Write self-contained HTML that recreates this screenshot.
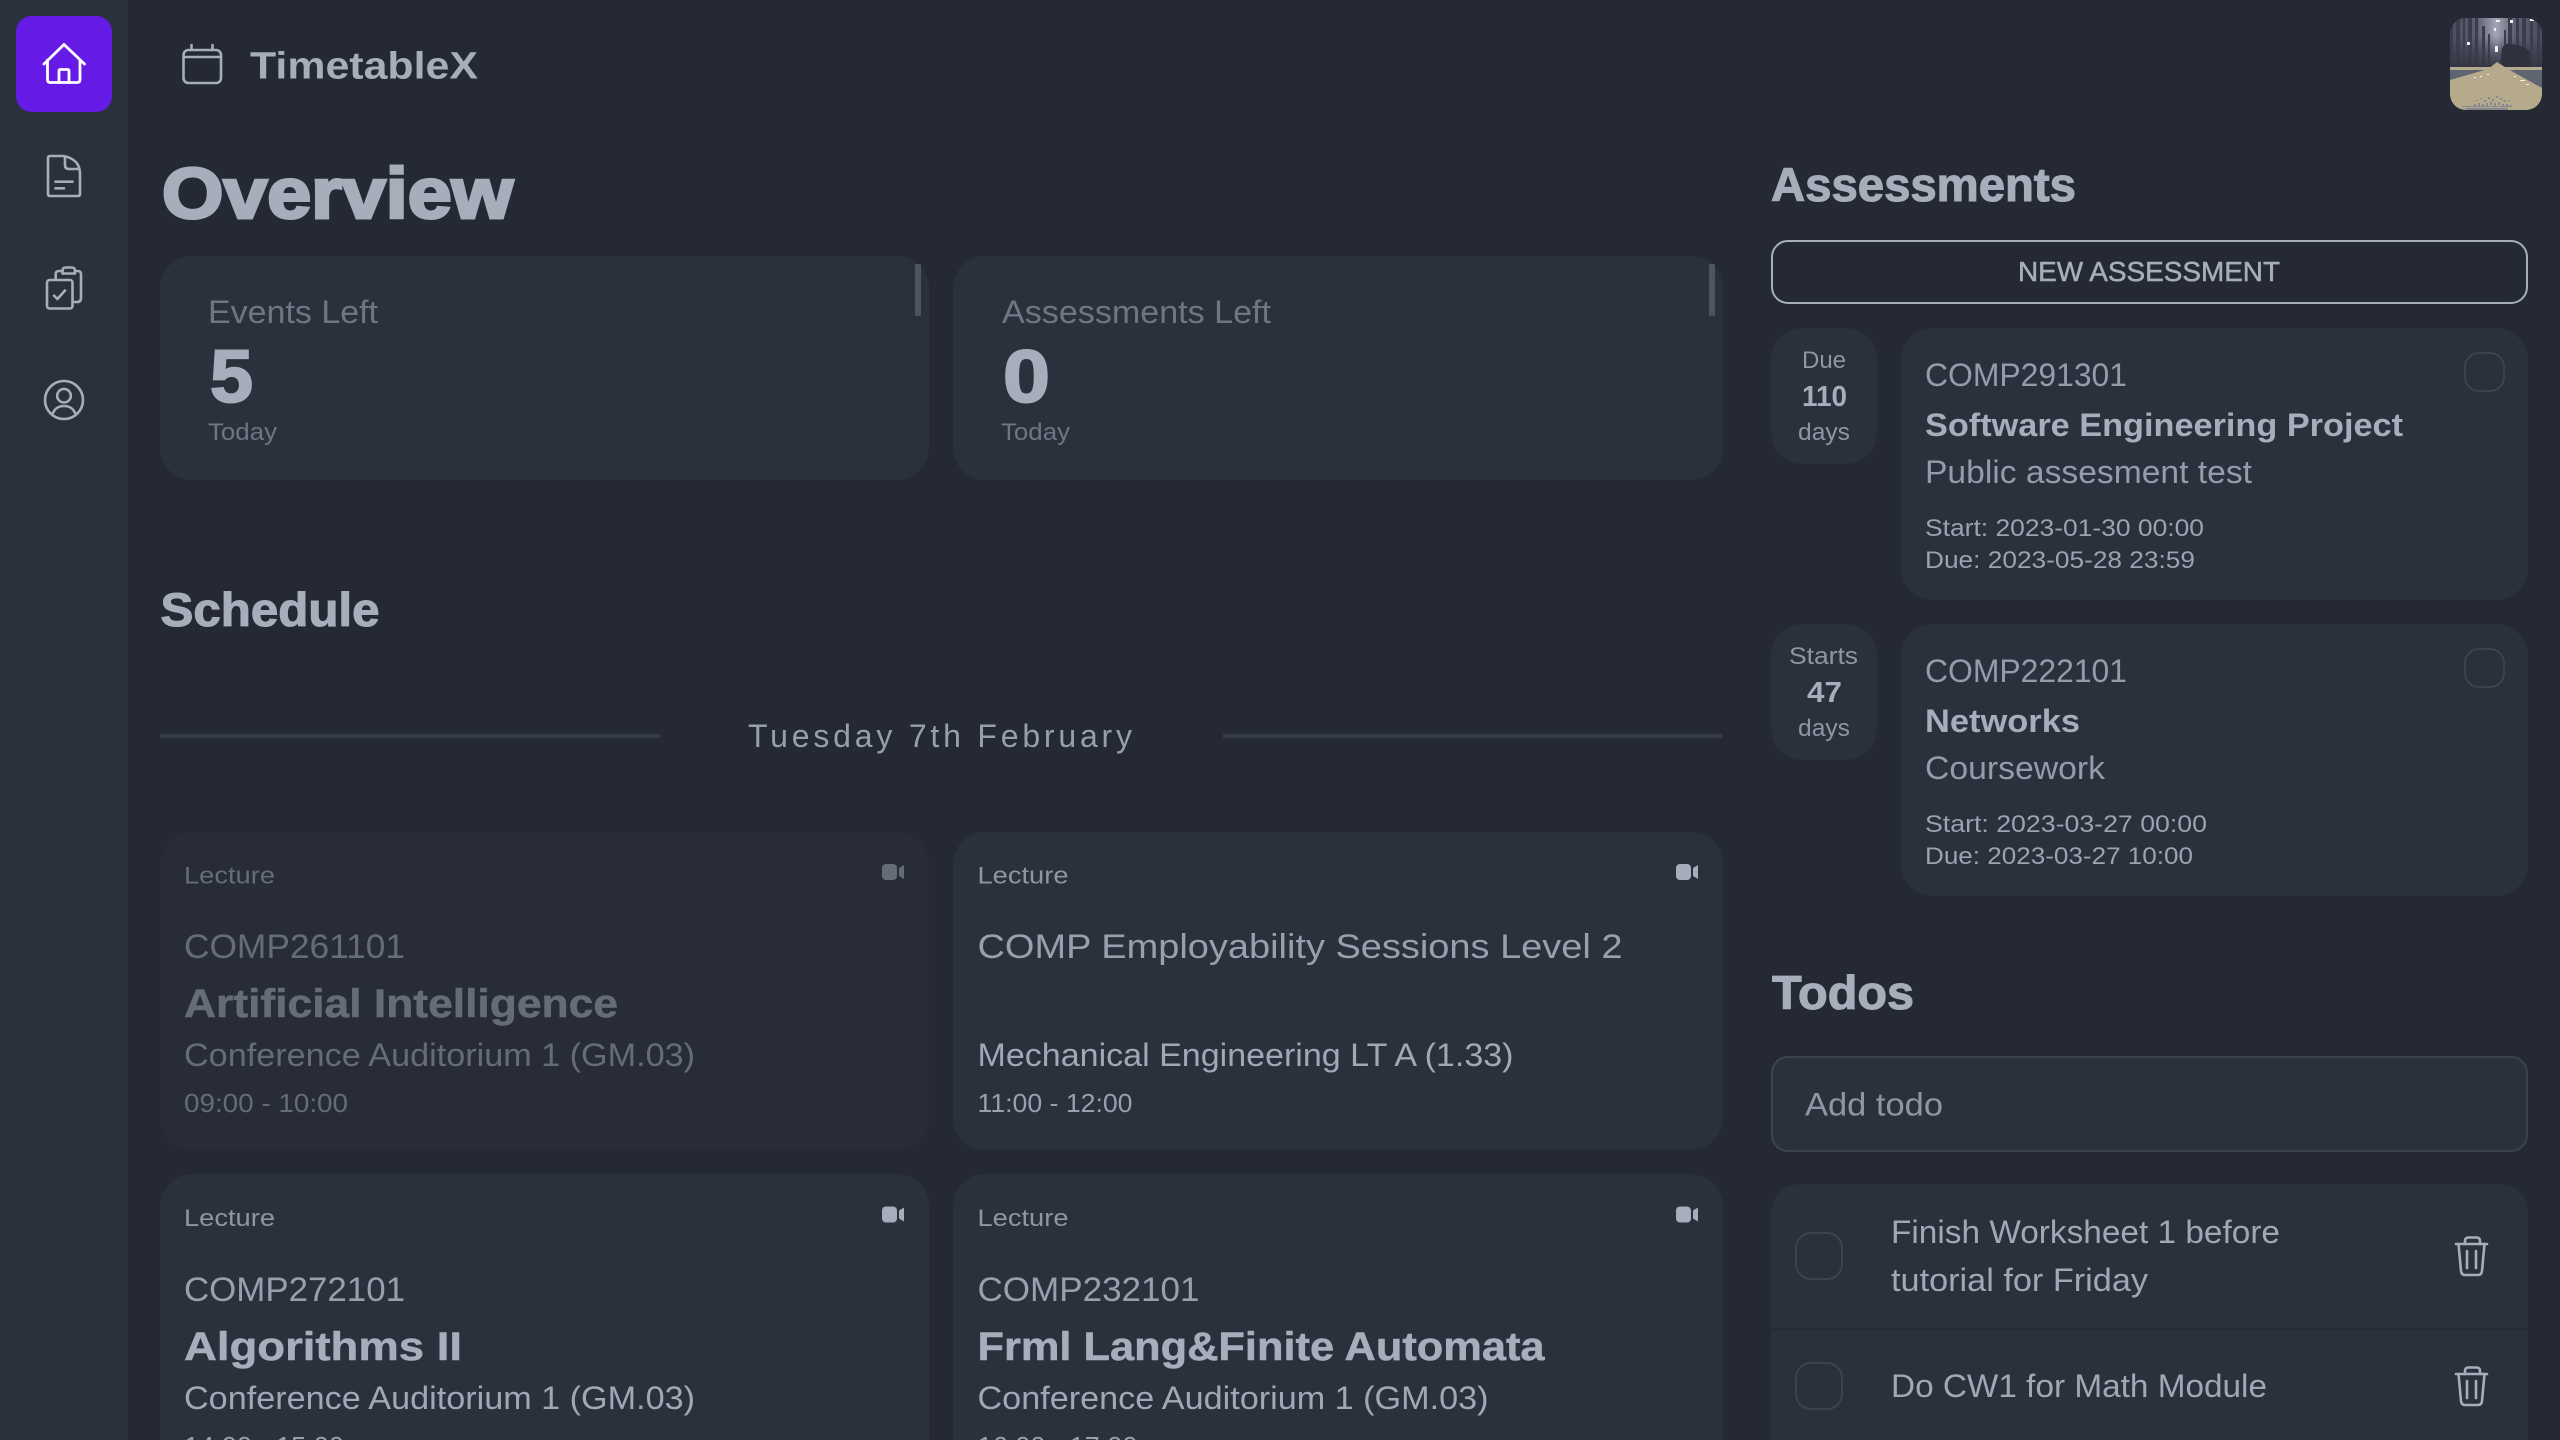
<!DOCTYPE html>
<html lang="en">
<head>
<meta charset="utf-8">
<title>TimetableX</title>
<style>
html,body{margin:0;padding:0;width:2560px;height:1440px;overflow:hidden;background:#242933}
svg{display:block}
text{font-family:"Liberation Sans",sans-serif;fill:#a6adbb;white-space:pre}
.b{font-weight:700}
.h1{font-weight:700;font-size:71px;stroke:#a6adbb;stroke-width:3px}
.h2{font-weight:700;font-size:47px;stroke:#a6adbb;stroke-width:1.1px}
.brand{font-weight:700;font-size:38px}
.stat{font-size:32px;fill:#6f7582}
.num{font-weight:700;font-size:74px;stroke:#a6adbb;stroke-width:2px}
.sm{font-size:24px;fill:#8f96a3}
.today{font-size:24px;fill:#6f7582}
.code{font-size:34px;fill:#98a0ae}
.ttl{font-weight:700;font-size:40px;stroke:#a6adbb;stroke-width:.5px}
.loc{font-size:32px;fill:#a0a7b5}
.time{font-size:26px;fill:#98a0ae}
.acode{font-size:32px;fill:#949baa}
.attl{font-weight:700;font-size:32px}
.adesc{font-size:32px;fill:#949baa}
.date{font-size:24px;fill:#9ba2b0}
.ic{fill:none;stroke:#a6adbb;stroke-width:2.6;stroke-linecap:round;stroke-linejoin:round}
.card{fill:#2a303c}
.cb{fill:none;stroke:#3c424f;stroke-width:2}
</style>
</head>
<body>
<svg xmlns="http://www.w3.org/2000/svg" width="2560" height="1440" viewBox="0 0 2560 1440">
<defs>
<clipPath id="av"><rect x="2450" y="18" width="92" height="92" rx="16"/></clipPath>
<linearGradient id="sky" x1="0" y1="0" x2="1" y2="0">
<stop offset="0" stop-color="#4a4e5e"/><stop offset=".3" stop-color="#5c6070"/><stop offset=".5" stop-color="#a3a7b8"/><stop offset=".7" stop-color="#5c6070"/><stop offset="1" stop-color="#4a4e5e"/>
</linearGradient>
<linearGradient id="fade" x1="0" y1="0" x2="0" y2="1">
<stop offset="0" stop-color="#3a3d4b" stop-opacity="0"/><stop offset=".55" stop-color="#3a3d4b" stop-opacity=".75"/><stop offset="1" stop-color="#333642"/>
</linearGradient>
</defs>

<rect width="2560" height="1440" fill="#242933"/>

<!-- Sidebar -->
<rect x="0" y="0" width="128" height="1440" fill="#2a303c"/>
<rect x="16" y="16" width="96" height="96" rx="16" fill="#661ae6"/>
<g fill="none" stroke="#fff" stroke-width="2.8" stroke-linecap="round" stroke-linejoin="round">
<path d="M44 64 L64 44.5 L84.500 64"/>
<path d="M47.500 60 V79.500 Q47.500 82.500 50.500 82.500 H77 Q80 82.500 80 79.500 V60"/>
<path d="M59 82.500 V71 Q59 69.500 60.500 69.500 H67.500 Q69 69.500 69 71 V82.500"/>
</g>
<g class="ic">
<path d="M62 156 H50 Q48 156 48 158 V194 Q48 196 50 196 H78 Q80 196 80 194 V174 Q80 163 71 158.500 Q66 156 62 156 Z"/>
<path d="M65 157 V165 Q65 169 69 169 H79"/>
<path d="M55.500 181.700 H72.500 M55.500 188.300 H64"/>
</g>
<g class="ic">
<rect x="47" y="280" width="25.500" height="28.500" rx="2.500"/>
<path d="M55.700 279 V274 Q55.700 271 59 271 H62.500 M75 271 H77.500 Q81 271 81 274 V298 Q81 302 77 302 H73"/>
<path d="M62.500 273.500 V270.500 Q62.500 267.500 66 267.500 H71.500 Q75 267.500 75 270.500 V273.500 Z"/>
<path d="M54 295.700 L57.400 299 L65 290.500"/>
</g>
<g class="ic">
<circle cx="64" cy="400" r="19"/>
<circle cx="64" cy="395.700" r="6.800"/>
<path d="M53 413 Q56 406 64 406 Q72 406 75 413"/>
</g>

<!-- Header -->
<g class="ic">
<rect x="183.500" y="50" width="37.500" height="33" rx="5"/>
<path d="M183.500 57 H221 M191.500 45 V50 M212.500 45 V50"/>
</g>
<text class="brand" x="250" y="78.500" textLength="228" lengthAdjust="spacingAndGlyphs">TimetableX</text>

<!-- Avatar -->
<g clip-path="url(#av)">
<rect x="2450" y="18" width="92" height="52" fill="url(#sky)"/>
<g fill="#3a3d4b">
<rect x="2450" y="18" width="3" height="50"/><rect x="2456" y="18" width="4" height="50"/><rect x="2463" y="18" width="2" height="50"/><rect x="2468" y="18" width="4" height="50"/><rect x="2475" y="18" width="3" height="50"/><rect x="2482" y="26" width="3" height="42"/><rect x="2488" y="34" width="2" height="34"/>
<rect x="2504" y="30" width="2" height="38"/><rect x="2508" y="18" width="4" height="50"/><rect x="2516" y="18" width="3" height="50"/><rect x="2522" y="18" width="4" height="50"/><rect x="2530" y="18" width="3" height="50"/><rect x="2537" y="18" width="3" height="50"/>
</g>
<rect x="2450" y="36" width="92" height="32" fill="url(#fade)"/>
<path d="M2502 48 Q2506 42 2512 44 Q2525 46 2530 52 V68 H2500 Z" fill="#2f323d"/>
<g fill="#f2f2f2"><rect x="2467" y="42" width="3" height="3"/><rect x="2495" y="46" width="3" height="6"/><rect x="2494" y="28" width="2" height="3"/><rect x="2496" y="20" width="4" height="2"/><rect x="2510" y="20" width="3" height="3"/><rect x="2530" y="19" width="4" height="2"/></g>
<rect x="2450" y="67" width="92" height="3" fill="#b5aa8e"/>
<rect x="2450" y="70" width="92" height="20" fill="#5e6470"/>
<path d="M2497 62 L2508 69 L2542 88 V110 H2450 V80 L2488 69 Z" fill="#b6aa8d"/>
<g fill="#7f8390" opacity=".85">
<rect x="2503" y="100" width="2" height="1"/>
<rect x="2476" y="100" width="2" height="1"/><rect x="2480" y="98" width="2" height="1"/><rect x="2484" y="100" width="2" height="2"/><rect x="2488" y="97" width="2" height="2"/><rect x="2492" y="99" width="2" height="2"/><rect x="2496" y="96" width="2" height="2"/><rect x="2500" y="98" width="2" height="2"/><rect x="2504" y="101" width="2" height="1"/><rect x="2508" y="100" width="2" height="1"/>
<rect x="2474" y="104" width="2" height="2"/><rect x="2478" y="103" width="2" height="3"/><rect x="2482" y="104" width="2" height="2"/><rect x="2486" y="103" width="2" height="3"/><rect x="2490" y="102" width="2" height="3"/><rect x="2494" y="103" width="2" height="3"/><rect x="2498" y="102" width="2" height="3"/><rect x="2502" y="104" width="2" height="3"/><rect x="2506" y="104" width="2" height="2"/><rect x="2510" y="105" width="2" height="2"/>
<rect x="2462" y="106" width="50" height="1"/><rect x="2466" y="108" width="42" height="2"/>
</g>
<g fill="#f0f0ee"><rect x="2487" y="74" width="2" height="1"/><rect x="2480" y="76" width="2" height="1"/><rect x="2474" y="77" width="2" height="1"/><rect x="2514" y="76" width="2" height="1"/><rect x="2520" y="80" width="5" height="1"/><rect x="2526" y="84" width="3" height="1"/></g>
</g>

<!-- Overview -->
<text class="h1" x="162" y="218" textLength="351" lengthAdjust="spacingAndGlyphs">Overview</text>

<rect class="card" x="160" y="256" width="769" height="224" rx="32"/>
<rect x="915" y="264" width="6" height="52" fill="#4d5360"/>
<text class="stat" x="208" y="323" textLength="170" lengthAdjust="spacingAndGlyphs">Events Left</text>
<text class="num" x="210" y="402" textLength="43" lengthAdjust="spacingAndGlyphs">5</text>
<text class="today" x="208" y="440" textLength="69" lengthAdjust="spacingAndGlyphs">Today</text>

<rect class="card" x="953" y="256" width="770" height="224" rx="32"/>
<rect x="1709" y="264" width="6" height="52" fill="#4d5360"/>
<text class="stat" x="1002" y="323" textLength="269" lengthAdjust="spacingAndGlyphs">Assessments Left</text>
<text class="num" x="1003" y="402" textLength="47" lengthAdjust="spacingAndGlyphs">0</text>
<text class="today" x="1001" y="440" textLength="69" lengthAdjust="spacingAndGlyphs">Today</text>

<!-- Schedule -->
<text class="h2" x="160.500" y="626" textLength="219" lengthAdjust="spacingAndGlyphs">Schedule</text>
<rect x="160" y="734" width="500" height="4" fill="#343a46"/>
<rect x="1223" y="734" width="500" height="4" fill="#343a46"/>
<text x="748" y="747" font-size="32" style="fill:#979eac" textLength="384" lengthAdjust="spacing">Tuesday 7th February</text>

<!-- Lecture 1 (past) -->
<g opacity=".5">
<rect class="card" x="160" y="832" width="769" height="318" rx="32"/>
<text class="sm" style="fill:#a6adbb" x="184" y="883.500" textLength="91" lengthAdjust="spacingAndGlyphs">Lecture</text>
<text class="code" style="fill:#a6adbb" x="184" y="958" textLength="221" lengthAdjust="spacingAndGlyphs">COMP261101</text>
<text class="ttl" x="184" y="1017" textLength="434" lengthAdjust="spacingAndGlyphs">Artificial Intelligence</text>
<text class="loc" style="fill:#a6adbb" x="184" y="1066" textLength="511" lengthAdjust="spacingAndGlyphs">Conference Auditorium 1 (GM.03)</text>
<text class="time" style="fill:#a6adbb" x="184" y="1112" textLength="164" lengthAdjust="spacingAndGlyphs">09:00 - 10:00</text>
<rect x="882" y="864" width="15" height="16" rx="4" fill="#a6adbb"/>
<path d="M899 868 L904 865 V879 L899 876 Z" fill="#a6adbb"/>
</g>

<!-- Lecture 2 -->
<rect class="card" x="953" y="832" width="770" height="318" rx="32"/>
<text class="sm" x="977.500" y="883.500" textLength="91" lengthAdjust="spacingAndGlyphs">Lecture</text>
<text class="code" x="977.500" y="958" textLength="645" lengthAdjust="spacingAndGlyphs">COMP Employability Sessions Level 2</text>
<text class="loc" x="977.500" y="1066" textLength="536" lengthAdjust="spacingAndGlyphs">Mechanical Engineering LT A (1.33)</text>
<text class="time" x="977.500" y="1112" textLength="155" lengthAdjust="spacingAndGlyphs">11:00 - 12:00</text>
<rect x="1676" y="864" width="15" height="16" rx="4" fill="#a6adbb"/>
<path d="M1693 868 L1698 865 V879 L1693 876 Z" fill="#a6adbb"/>

<!-- Lecture 3 -->
<rect class="card" x="160" y="1174" width="769" height="320" rx="32"/>
<text class="sm" x="184" y="1226" textLength="91" lengthAdjust="spacingAndGlyphs">Lecture</text>
<text class="code" x="184" y="1301" textLength="221" lengthAdjust="spacingAndGlyphs">COMP272101</text>
<text class="ttl" x="184" y="1360" textLength="278" lengthAdjust="spacingAndGlyphs">Algorithms II</text>
<text class="loc" x="184" y="1409" textLength="511" lengthAdjust="spacingAndGlyphs">Conference Auditorium 1 (GM.03)</text>
<text class="time" x="184" y="1455" textLength="160" lengthAdjust="spacingAndGlyphs">14:00 - 15:00</text>
<rect x="882" y="1206.500" width="15" height="16" rx="4" fill="#a6adbb"/>
<path d="M899 1210.500 L904 1207.500 V1221.500 L899 1218.500 Z" fill="#a6adbb"/>

<!-- Lecture 4 -->
<rect class="card" x="953" y="1174" width="770" height="320" rx="32"/>
<text class="sm" x="977.500" y="1226" textLength="91" lengthAdjust="spacingAndGlyphs">Lecture</text>
<text class="code" x="977.500" y="1301" textLength="222" lengthAdjust="spacingAndGlyphs">COMP232101</text>
<text class="ttl" x="977.500" y="1360" textLength="567" lengthAdjust="spacingAndGlyphs">Frml Lang&amp;Finite Automata</text>
<text class="loc" x="977.500" y="1409" textLength="511" lengthAdjust="spacingAndGlyphs">Conference Auditorium 1 (GM.03)</text>
<text class="time" x="977.500" y="1455" textLength="160" lengthAdjust="spacingAndGlyphs">16:00 - 17:00</text>
<rect x="1676" y="1206.500" width="15" height="16" rx="4" fill="#a6adbb"/>
<path d="M1693 1210.500 L1698 1207.500 V1221.500 L1693 1218.500 Z" fill="#a6adbb"/>

<!-- Assessments -->
<text class="h2" x="1771" y="201" textLength="305" lengthAdjust="spacingAndGlyphs">Assessments</text>
<rect x="1772" y="241" width="755" height="62" rx="16" fill="none" stroke="#a6adbb" stroke-width="2"/>
<text x="2018" y="281" font-size="28" style="stroke:#a6adbb;stroke-width:.5px" textLength="262" lengthAdjust="spacingAndGlyphs">NEW ASSESSMENT</text>

<rect class="card" x="1771" y="328" width="106" height="136" rx="32"/>
<text class="sm" x="1802" y="368" textLength="44" lengthAdjust="spacingAndGlyphs">Due</text>
<text class="b" x="1802" y="406" font-size="29" textLength="45" lengthAdjust="spacingAndGlyphs">110</text>
<text class="sm" x="1798" y="440" textLength="52" lengthAdjust="spacingAndGlyphs">days</text>
<rect class="card" x="1901" y="328" width="627" height="272" rx="32"/>
<text class="acode" x="1925" y="386" textLength="202" lengthAdjust="spacingAndGlyphs">COMP291301</text>
<text class="attl" x="1925" y="436" textLength="478" lengthAdjust="spacingAndGlyphs">Software Engineering Project</text>
<text class="adesc" x="1925" y="483" textLength="327" lengthAdjust="spacingAndGlyphs">Public assesment test</text>
<text class="date" x="1925" y="536" textLength="279" lengthAdjust="spacingAndGlyphs">Start: 2023-01-30 00:00</text>
<text class="date" x="1925" y="568" textLength="270" lengthAdjust="spacingAndGlyphs">Due: 2023-05-28 23:59</text>
<rect class="cb" x="2465" y="353" width="39" height="38" rx="14"/>

<rect class="card" x="1771" y="624" width="106" height="136" rx="32"/>
<text class="sm" x="1789" y="664" textLength="69" lengthAdjust="spacingAndGlyphs">Starts</text>
<text class="b" x="1807" y="702" font-size="29" textLength="35" lengthAdjust="spacingAndGlyphs">47</text>
<text class="sm" x="1798" y="736" textLength="52" lengthAdjust="spacingAndGlyphs">days</text>
<rect class="card" x="1901" y="624" width="627" height="272" rx="32"/>
<text class="acode" x="1925" y="682" textLength="202" lengthAdjust="spacingAndGlyphs">COMP222101</text>
<text class="attl" x="1925" y="732" textLength="155" lengthAdjust="spacingAndGlyphs">Networks</text>
<text class="adesc" x="1925" y="779" textLength="180" lengthAdjust="spacingAndGlyphs">Coursework</text>
<text class="date" x="1925" y="832" textLength="282" lengthAdjust="spacingAndGlyphs">Start: 2023-03-27 00:00</text>
<text class="date" x="1925" y="864" textLength="268" lengthAdjust="spacingAndGlyphs">Due: 2023-03-27 10:00</text>
<rect class="cb" x="2465" y="649" width="39" height="38" rx="14"/>

<!-- Todos -->
<text class="h2" x="1772" y="1009" textLength="142" lengthAdjust="spacingAndGlyphs">Todos</text>
<rect x="1772" y="1057" width="755" height="94" rx="16" fill="#2a303c" stroke="#3c424f" stroke-width="2"/>
<text x="1805" y="1115.500" font-size="32" style="fill:#8f96a3" textLength="138" lengthAdjust="spacingAndGlyphs">Add todo</text>

<path class="card" d="M1771 1440 V1216 Q1771 1184 1803 1184 H2496 Q2528 1184 2528 1216 V1440 Z"/>
<rect x="1771" y="1328" width="757" height="2.500" fill="#262b36"/>

<rect class="cb" x="1796" y="1233" width="46" height="46" rx="15"/>
<text x="1891" y="1243" font-size="32" style="fill:#a0a7b5" textLength="389" lengthAdjust="spacingAndGlyphs">Finish Worksheet 1 before</text>
<text x="1891" y="1291" font-size="32" style="fill:#a0a7b5" textLength="257" lengthAdjust="spacingAndGlyphs">tutorial for Friday</text>
<g class="ic">
<path d="M2456 1244 H2487"/>
<path d="M2465 1244 V1241 Q2465 1237.500 2468.500 1237.500 H2476.500 Q2480 1237.500 2480 1241 V1244"/>
<path d="M2458.500 1244 L2461 1271 Q2461.500 1275 2465 1275 H2478 Q2481.500 1275 2482 1271 L2484.500 1244"/>
<path d="M2467 1251 V1268 M2476 1251 V1268"/>
</g>

<rect class="cb" x="1796" y="1363" width="46" height="46" rx="15"/>
<text x="1891" y="1397" font-size="32" style="fill:#a0a7b5" textLength="376" lengthAdjust="spacingAndGlyphs">Do CW1 for Math Module</text>
<g class="ic" transform="translate(0 130)">
<path d="M2456 1244 H2487"/>
<path d="M2465 1244 V1241 Q2465 1237.500 2468.500 1237.500 H2476.500 Q2480 1237.500 2480 1241 V1244"/>
<path d="M2458.500 1244 L2461 1271 Q2461.500 1275 2465 1275 H2478 Q2481.500 1275 2482 1271 L2484.500 1244"/>
<path d="M2467 1251 V1268 M2476 1251 V1268"/>
</g>
</svg>
</body>
</html>
